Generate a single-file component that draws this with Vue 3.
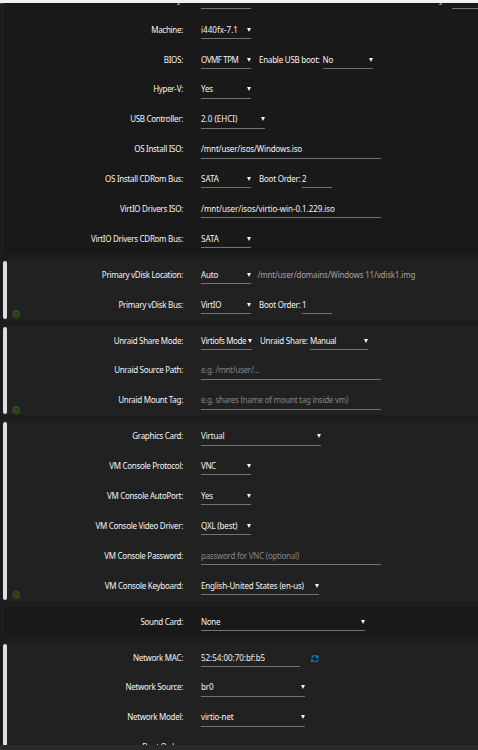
<script setup>
// Field kinds: select, input, hint (placeholder), note (plain text), tag (inline label)
// "track" is the letter spacing of a field's text, in px
const sel = (text, w = 50, track = -0.17) => ({ kind: 'select', text, w, track })
const inp = (text, w = 180, track = -0.17) => ({ kind: 'input', text, w, track })
const hint = (text, w = 180) => ({ kind: 'hint', text, w, track: -0.27 })
const tag = (text, w) => ({ kind: 'tag', text, w, track: -0.24 })

const sections = [
  {
    rows: [
      { label: 'Initial Memory:', fields: [sel(''), { kind: 'tag end', text: 'Max Memory:', w: 201, track: -0.24 }, sel('')] },
      { label: 'Machine:', fields: [sel('i440fx-7.1', 50, 0.03)] },
      { label: 'BIOS:', fields: [sel('OVMF TPM', 50, -0.45), tag('Enable USB boot:', 71.5), sel('No')] },
      { label: 'Hyper-V:', fields: [sel('Yes')] },
      { label: 'USB Controller:', fields: [sel('2.0 (EHCI)', 64, 0)] },
      { label: 'OS Install ISO:', fields: [inp('/mnt/user/isos/Windows.iso')] },
      { label: 'OS Install CDRom Bus:', fields: [sel('SATA', 50, 0), tag('Boot Order:', 51), inp('2', 30)] },
      { label: 'VirtIO Drivers ISO:', fields: [inp('/mnt/user/isos/virtio-win-0.1.229.iso', 180, -0.06)] },
      { label: 'VirtIO Drivers CDRom Bus:', fields: [sel('SATA', 50, 0)] },
    ],
  },
  {
    multi: true,
    add: true,
    rows: [
      { label: 'Primary vDisk Location:', fields: [sel('Auto'), { kind: 'note', text: '/mnt/user/domains/Windows 11/vdisk1.img', w: 170, track: -0.19 }] },
      { label: 'Primary vDisk Bus:', fields: [sel('VirtIO', 50, -0.3), tag('Boot Order:', 51), inp('1', 30)] },
    ],
  },
  {
    multi: true,
    add: true,
    rows: [
      { label: 'Unraid Share Mode:', fields: [sel('Virtiofs Mode', 51, -0.38), tag('Unraid Share:', 58), sel('Manual', 57.5, -0.35)] },
      { label: 'Unraid Source Path:', fields: [hint('e.g. /mnt/user/...')] },
      { label: 'Unraid Mount Tag:', fields: [hint('e.g. shares (name of mount tag inside vm)')] },
    ],
  },
  {
    multi: true,
    add: true,
    rows: [
      { label: 'Graphics Card:', fields: [sel('Virtual', 120)] },
      { label: 'VM Console Protocol:', fields: [sel('VNC', 50, -0.4)] },
      { label: 'VM Console AutoPort:', fields: [sel('Yes')] },
      { label: 'VM Console Video Driver:', fields: [sel('QXL (best)')] },
      { label: 'VM Console Password:', fields: [hint('password for VNC (optional)')] },
      { label: 'VM Console Keyboard:', fields: [sel('English-United States (en-us)', 118)] },
    ],
  },
  { rows: [{ label: 'Sound Card:', fields: [sel('None', 164, -0.3)] }] },
  {
    multi: true,
    rows: [
      { label: 'Network MAC:', fields: [inp('52:54:00:70:bf:b5', 99, -0.02), { kind: 'refresh', w: 30 }] },
      { label: 'Network Source:', fields: [sel('br0', 104)] },
      { label: 'Network Model:', fields: [sel('virtio-net', 104)] },
      { label: 'Boot Order:', fields: [] },
    ],
  },
]

const fieldStyle = (f) => ({
  width: f.w + 'px',
  letterSpacing: (f.track ?? 0) + 'px',
})
</script>

<template>
  <div class="page">
    <header class="topbar"></header>
    <main class="form">
      <section v-for="(s, i) in sections" :key="i" class="panel" :class="{ multi: s.multi }">
        <div v-for="r in s.rows" :key="r.label" class="row">
          <span class="label">{{ r.label }}</span>
          <span v-for="(f, j) in r.fields" :key="j" class="field" :class="f.kind" :style="fieldStyle(f)">
            {{ f.text }}
            <i v-if="f.kind === 'select'" class="arrow"></i>
            <svg v-if="f.kind === 'refresh'" class="refresh-icon" viewBox="0 0 1536 1536">
              <path d="M1511 928q0 5-1 7-64 268-268 434.500T764 1536q-146 0-282.500-55T238 1324l-129 129q-19 19-45 19t-45-19-19-45V960q0-26 19-45t45-19h448q26 0 45 19t19 45-19 45l-137 137q71 66 161 102t187 36q134 0 250-65t186-179q11-17 53-117 8-23 30-23h192q13 0 22.500 9.500t9.500 22.500zM1536 128v448q0 26-19 45t-45 19h-448q-26 0-45-19t-19-45 19-45l138-138Q969 256 768 256q-134 0-250 65T332 500q-11 17-53 117-8 23-30 23H50q-13 0-22.500-9.500T18 608v-7q65-268 270-434.500T768 0q146 0 284 55.500T1297 212l130-129q19-19 45-19t45 19 19 45z" />
            </svg>
          </span>
        </div>
        <svg v-if="s.add" class="add" viewBox="0 0 8 8">
          <circle cx="4" cy="4" r="3.2" />
          <path d="M4 2.3v3.4M2.300 4h3.4" />
        </svg>
      </section>
    </main>
    <footer class="bottombar"></footer>
  </div>
</template>

<style>
body {
  background: #1c1c1c;
}
</style>

<style scoped>
.page {
  display: flex;
  flex-direction: column;
  height: 750px;
  overflow: hidden;
  background: #1c1c1c;
  color: #f4f4f4;
  font: 8px/12px "Noto Sans", sans-serif;
}
.topbar {
  height: 4px;
  flex: none;
  background: #f0f0f0;
  border-bottom: 1px solid #484848;
  box-sizing: border-box;
}
.form {
  flex: 1;
  min-height: 0;
  overflow: hidden;
  display: flex;
  flex-direction: column;
  gap: 6px;
  margin-top: -1px;
}
.panel {
  position: relative;
  flex: none;
  margin-left: 4px;
  background: #191919;
}
.panel:first-child {
  margin-top: -18px;
}
.panel.multi {
  background: #212121;
}
.panel.multi::before {
  content: "";
  position: absolute;
  left: -0.7px;
  top: 1px;
  bottom: 1px;
  width: 4px;
  border-radius: 2px;
  background: #dedede;
}
.row {
  display: flex;
  height: 29.9px;
  padding-top: 8.8px;
  box-sizing: border-box;
  white-space: nowrap;
}
.label {
  width: 179px;
  margin-right: 18px;
  text-align: right;
  flex: none;
  letter-spacing: -0.3px;
}
.field {
  position: relative;
  flex: none;
  height: 15.3px;
  box-sizing: border-box;
}
.select,
.input,
.hint {
  border-bottom: 1px solid #737373;
}
.hint {
  color: #858585;
}
.tag {
  padding-left: 8px;
}
.tag.end {
  padding-right: 7px;
  text-align: right;
}
.note {
  padding-left: 6.5px;
  padding-top: 0.5px;
  color: #a3a3a3;
}
.arrow {
  position: absolute;
  right: 0;
  top: 4px;
  border-left: 2px solid transparent;
  border-right: 2px solid transparent;
  border-top: 4px solid #f4f4f4;
}
.refresh-icon {
  display: block;
  width: 7.6px;
  height: 7.6px;
  margin: 3.4px 0 0 11.2px;
  fill: #0e80bd;
  stroke: #0e80bd;
  stroke-width: 30;
}
.add {
  position: absolute;
  left: 8px;
  bottom: 1.5px;
  width: 8px;
  height: 8px;
  fill: none;
  stroke: #35541a;
  stroke-width: 1.4;
}
.bottombar {
  height: 5px;
  flex: none;
  background: #2b2928;
}
</style>
